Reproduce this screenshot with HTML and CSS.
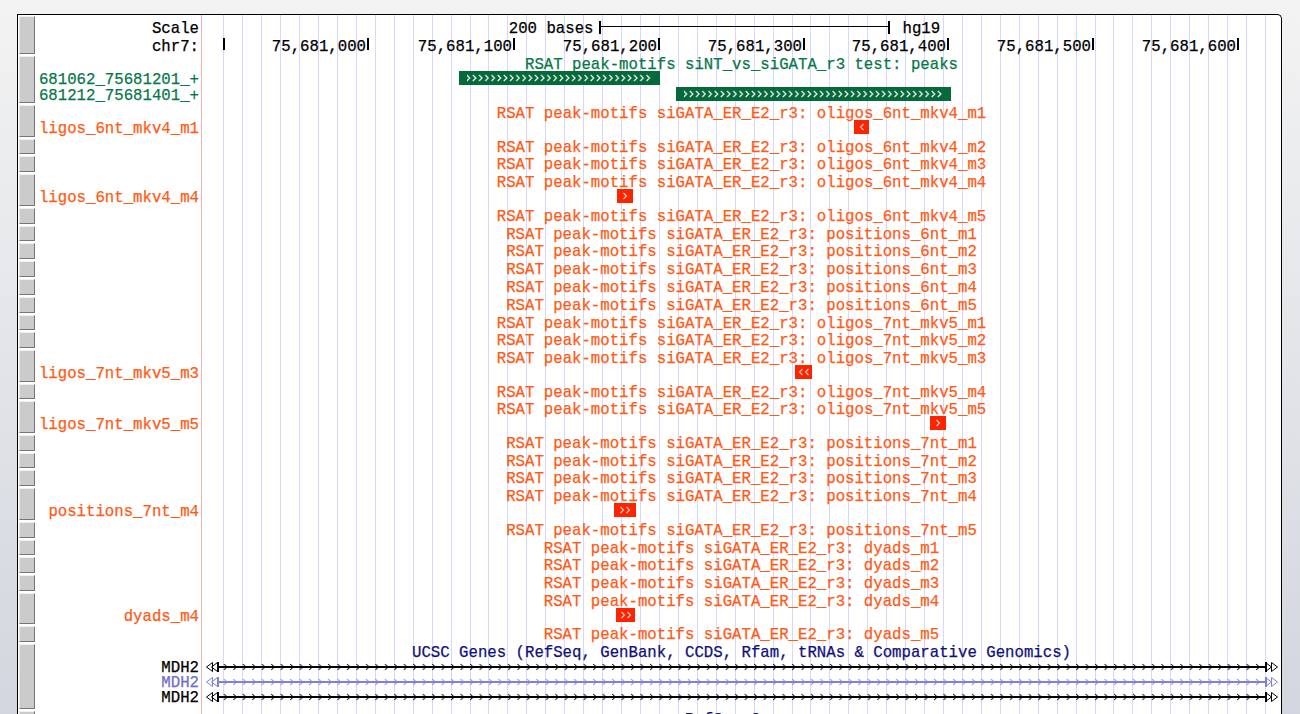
FILE: index.html
```html
<!DOCTYPE html>
<html>
<head>
<meta charset="utf-8">
<link rel="stylesheet" href="styles.css">
</head>
<body>
<svg class="defs" width="0" height="0" aria-hidden="true">
  <defs>
    <pattern id="pk" width="6.2" height="14" patternUnits="userSpaceOnUse">
      <path d="M1.5 4l3 3-3 3" fill="none" stroke="#ffffff" stroke-width="1.1"/>
    </pattern>
    <pattern id="gk" width="9.47" height="15" patternUnits="userSpaceOnUse">
      <path d="M3 5l3 3-3 3" fill="none" stroke="#000000" stroke-width="1"/>
    </pattern>
    <pattern id="gb" width="9.47" height="15" patternUnits="userSpaceOnUse">
      <path d="M3 5l3 3-3 3" fill="none" stroke="#8080d8" stroke-width="1"/>
    </pattern>
  </defs>
</svg>

<div class="panel">
  <svg class="grid" width="1079" height="100%">
    <path d="M21.5 0V2000M40.5 0V2000M59.5 0V2000M78.5 0V2000M97.5 0V2000M116.5 0V2000M135.5 0V2000M154.5 0V2000M173.5 0V2000M192.5 0V2000M211.5 0V2000M230.5 0V2000M249.5 0V2000M268.5 0V2000M286.5 0V2000M305.5 0V2000M324.5 0V2000M343.5 0V2000M362.5 0V2000M381.5 0V2000M400.5 0V2000M419.5 0V2000M438.5 0V2000M457.5 0V2000M476.5 0V2000M495.5 0V2000M514.5 0V2000M533.5 0V2000M552.5 0V2000M571.5 0V2000M590.5 0V2000M608.5 0V2000M627.5 0V2000M646.5 0V2000M665.5 0V2000M684.5 0V2000M703.5 0V2000M722.5 0V2000M741.5 0V2000M760.5 0V2000M779.5 0V2000M798.5 0V2000M817.5 0V2000M836.5 0V2000M855.5 0V2000M874.5 0V2000M893.5 0V2000M911.5 0V2000M930.5 0V2000M949.5 0V2000M968.5 0V2000M987.5 0V2000M1006.5 0V2000M1025.5 0V2000M1044.5 0V2000M1063.5 0V2000" stroke="#d6d6ff" stroke-width="1"/>
  </svg>

  <!-- Base position -->
  <div class="track base">
    <div class="btncol"><span class="btn"></span></div>
    <div class="labels">
      <div class="brow">Scale</div>
      <div class="brow">chr7:</div>
    </div>
    <div class="data">
      <div class="scalerow brow">
        <span class="sl">200 bases</span><span class="sbar"></span><span class="sr">hg19</span>
      </div>
      <div class="ruler brow">
        <span class="tick" style="left:21px"></span>
        <span class="tick" style="left:165px"><span>75,681,000</span></span>
        <span class="tick" style="left:311px"><span>75,681,100</span></span>
        <span class="tick" style="left:456px"><span>75,681,200</span></span>
        <span class="tick" style="left:601px"><span>75,681,300</span></span>
        <span class="tick" style="left:745px"><span>75,681,400</span></span>
        <span class="tick" style="left:890px"><span>75,681,500</span></span>
        <span class="tick" style="left:1035px"><span>75,681,600</span></span>
      </div>
    </div>
  </div>

  <!-- Peaks -->
  <div class="track green">
    <div class="btncol"><span class="btn"></span></div>
    <div class="labels">
      <div class="ttl"></div>
      <div class="irow">681062_75681201_+</div>
      <div class="irow">681212_75681401_+</div>
    </div>
    <div class="data">
      <div class="ttl">RSAT peak-motifs siNT_vs_siGATA_r3 test: peaks</div>
      <div class="irow">
        <svg class="peak" style="left:257px" width="201" height="14"><rect width="201" height="14" fill="#05693a"/><rect x="8" width="184" height="14" fill="url(#pk)"/></svg>
      </div>
      <div class="irow">
        <svg class="peak" style="left:474px" width="275" height="14"><rect width="275" height="14" fill="#05693a"/><rect x="8" width="259" height="14" fill="url(#pk)"/></svg>
      </div>
    </div>
  </div>

  <!-- oligos 6nt -->
  <div class="track motif">
    <div class="btncol"><span class="btn"></span></div>
    <div class="labels"><div class="ttl"></div><div class="irow">ligos_6nt_mkv4_m1</div></div>
    <div class="data">
      <div class="ttl">RSAT peak-motifs siGATA_ER_E2_r3: oligos_6nt_mkv4_m1</div>
      <div class="irow"><span class="feat" style="left:652px;width:15px"><svg width="6" height="14"><path d="M4.5 4l-3 3 3 3" class="chev"/></svg></span></div>
    </div>
  </div>
  <div class="track motif">
    <div class="btncol"><span class="btn"></span></div>
    <div class="labels"><div class="ttl"></div></div>
    <div class="data"><div class="ttl">RSAT peak-motifs siGATA_ER_E2_r3: oligos_6nt_mkv4_m2</div></div>
  </div>
  <div class="track motif">
    <div class="btncol"><span class="btn"></span></div>
    <div class="labels"><div class="ttl"></div></div>
    <div class="data"><div class="ttl">RSAT peak-motifs siGATA_ER_E2_r3: oligos_6nt_mkv4_m3</div></div>
  </div>
  <div class="track motif">
    <div class="btncol"><span class="btn"></span></div>
    <div class="labels"><div class="ttl"></div><div class="irow">ligos_6nt_mkv4_m4</div></div>
    <div class="data">
      <div class="ttl">RSAT peak-motifs siGATA_ER_E2_r3: oligos_6nt_mkv4_m4</div>
      <div class="irow"><span class="feat" style="left:415px;width:16px"><svg width="6" height="14"><path d="M1.5 4l3 3-3 3" class="chev"/></svg></span></div>
    </div>
  </div>
  <div class="track motif">
    <div class="btncol"><span class="btn"></span></div>
    <div class="labels"><div class="ttl"></div></div>
    <div class="data"><div class="ttl">RSAT peak-motifs siGATA_ER_E2_r3: oligos_6nt_mkv4_m5</div></div>
  </div>

  <!-- positions 6nt -->
  <div class="track motif">
    <div class="btncol"><span class="btn"></span></div>
    <div class="labels"><div class="ttl"></div></div>
    <div class="data"><div class="ttl">RSAT peak-motifs siGATA_ER_E2_r3: positions_6nt_m1</div></div>
  </div>
  <div class="track motif">
    <div class="btncol"><span class="btn"></span></div>
    <div class="labels"><div class="ttl"></div></div>
    <div class="data"><div class="ttl">RSAT peak-motifs siGATA_ER_E2_r3: positions_6nt_m2</div></div>
  </div>
  <div class="track motif">
    <div class="btncol"><span class="btn"></span></div>
    <div class="labels"><div class="ttl"></div></div>
    <div class="data"><div class="ttl">RSAT peak-motifs siGATA_ER_E2_r3: positions_6nt_m3</div></div>
  </div>
  <div class="track motif">
    <div class="btncol"><span class="btn"></span></div>
    <div class="labels"><div class="ttl"></div></div>
    <div class="data"><div class="ttl">RSAT peak-motifs siGATA_ER_E2_r3: positions_6nt_m4</div></div>
  </div>
  <div class="track motif">
    <div class="btncol"><span class="btn"></span></div>
    <div class="labels"><div class="ttl"></div></div>
    <div class="data"><div class="ttl">RSAT peak-motifs siGATA_ER_E2_r3: positions_6nt_m5</div></div>
  </div>

  <!-- oligos 7nt -->
  <div class="track motif">
    <div class="btncol"><span class="btn"></span></div>
    <div class="labels"><div class="ttl"></div></div>
    <div class="data"><div class="ttl">RSAT peak-motifs siGATA_ER_E2_r3: oligos_7nt_mkv5_m1</div></div>
  </div>
  <div class="track motif">
    <div class="btncol"><span class="btn"></span></div>
    <div class="labels"><div class="ttl"></div></div>
    <div class="data"><div class="ttl">RSAT peak-motifs siGATA_ER_E2_r3: oligos_7nt_mkv5_m2</div></div>
  </div>
  <div class="track motif">
    <div class="btncol"><span class="btn"></span></div>
    <div class="labels"><div class="ttl"></div><div class="irow">ligos_7nt_mkv5_m3</div></div>
    <div class="data">
      <div class="ttl">RSAT peak-motifs siGATA_ER_E2_r3: oligos_7nt_mkv5_m3</div>
      <div class="irow"><span class="feat" style="left:593px;width:17px"><svg width="12" height="14"><path d="M4.5 4l-3 3 3 3M10.5 4l-3 3 3 3" class="chev"/></svg></span></div>
    </div>
  </div>
  <div class="track motif">
    <div class="btncol"><span class="btn"></span></div>
    <div class="labels"><div class="ttl"></div></div>
    <div class="data"><div class="ttl">RSAT peak-motifs siGATA_ER_E2_r3: oligos_7nt_mkv5_m4</div></div>
  </div>
  <div class="track motif">
    <div class="btncol"><span class="btn"></span></div>
    <div class="labels"><div class="ttl"></div><div class="irow">ligos_7nt_mkv5_m5</div></div>
    <div class="data">
      <div class="ttl">RSAT peak-motifs siGATA_ER_E2_r3: oligos_7nt_mkv5_m5</div>
      <div class="irow"><span class="feat" style="left:728px;width:16px"><svg width="6" height="14"><path d="M1.5 4l3 3-3 3" class="chev"/></svg></span></div>
    </div>
  </div>

  <!-- positions 7nt -->
  <div class="track motif">
    <div class="btncol"><span class="btn"></span></div>
    <div class="labels"><div class="ttl"></div></div>
    <div class="data"><div class="ttl">RSAT peak-motifs siGATA_ER_E2_r3: positions_7nt_m1</div></div>
  </div>
  <div class="track motif">
    <div class="btncol"><span class="btn"></span></div>
    <div class="labels"><div class="ttl"></div></div>
    <div class="data"><div class="ttl">RSAT peak-motifs siGATA_ER_E2_r3: positions_7nt_m2</div></div>
  </div>
  <div class="track motif">
    <div class="btncol"><span class="btn"></span></div>
    <div class="labels"><div class="ttl"></div></div>
    <div class="data"><div class="ttl">RSAT peak-motifs siGATA_ER_E2_r3: positions_7nt_m3</div></div>
  </div>
  <div class="track motif">
    <div class="btncol"><span class="btn"></span></div>
    <div class="labels"><div class="ttl"></div><div class="irow">positions_7nt_m4</div></div>
    <div class="data">
      <div class="ttl">RSAT peak-motifs siGATA_ER_E2_r3: positions_7nt_m4</div>
      <div class="irow"><span class="feat" style="left:412px;width:22px"><svg width="12" height="14"><path d="M1.5 4l3 3-3 3M7.5 4l3 3-3 3" class="chev"/></svg></span></div>
    </div>
  </div>
  <div class="track motif">
    <div class="btncol"><span class="btn"></span></div>
    <div class="labels"><div class="ttl"></div></div>
    <div class="data"><div class="ttl">RSAT peak-motifs siGATA_ER_E2_r3: positions_7nt_m5</div></div>
  </div>

  <!-- dyads -->
  <div class="track motif">
    <div class="btncol"><span class="btn"></span></div>
    <div class="labels"><div class="ttl"></div></div>
    <div class="data"><div class="ttl">RSAT peak-motifs siGATA_ER_E2_r3: dyads_m1</div></div>
  </div>
  <div class="track motif">
    <div class="btncol"><span class="btn"></span></div>
    <div class="labels"><div class="ttl"></div></div>
    <div class="data"><div class="ttl">RSAT peak-motifs siGATA_ER_E2_r3: dyads_m2</div></div>
  </div>
  <div class="track motif">
    <div class="btncol"><span class="btn"></span></div>
    <div class="labels"><div class="ttl"></div></div>
    <div class="data"><div class="ttl">RSAT peak-motifs siGATA_ER_E2_r3: dyads_m3</div></div>
  </div>
  <div class="track motif">
    <div class="btncol"><span class="btn"></span></div>
    <div class="labels"><div class="ttl"></div><div class="irow">dyads_m4</div></div>
    <div class="data">
      <div class="ttl">RSAT peak-motifs siGATA_ER_E2_r3: dyads_m4</div>
      <div class="irow"><span class="feat" style="left:414px;width:19px"><svg width="12" height="14"><path d="M1.5 4l3 3-3 3M7.5 4l3 3-3 3" class="chev"/></svg></span></div>
    </div>
  </div>
  <div class="track motif">
    <div class="btncol"><span class="btn"></span></div>
    <div class="labels"><div class="ttl"></div></div>
    <div class="data"><div class="ttl">RSAT peak-motifs siGATA_ER_E2_r3: dyads_m5</div></div>
  </div>

  <!-- UCSC Genes -->
  <div class="track genes">
    <div class="btncol"><span class="btn"></span></div>
    <div class="labels">
      <div class="ttl"></div>
      <div class="grow">MDH2</div>
      <div class="grow alt">MDH2</div>
      <div class="grow">MDH2</div>
    </div>
    <div class="data">
      <div class="ttl">UCSC Genes (RefSeq, GenBank, CCDS, Rfam, tRNAs &amp; Comparative Genomics)</div>
      <div class="grow">
        <svg class="gene" width="1079" height="15">
          <rect x="16" y="7" width="1048" height="2" fill="#000"/>
          <rect x="16" y="0" width="1048" height="15" fill="url(#gk)"/>
          <path d="M4.5 8L10.5 3.5V12.5ZM9.5 8L15.5 3.5V12.5Z" fill="none" stroke="#000"/>
          <rect x="15" y="3" width="2" height="10" fill="#000"/>
          <rect x="1063" y="3" width="2" height="10" fill="#000"/>
          <path d="M1069.5 8L1063.5 3.5V12.5ZM1075.5 8L1069.5 3.5V12.5Z" fill="none" stroke="#000"/>
        </svg>
      </div>
      <div class="grow">
        <svg class="gene" width="1079" height="15">
          <rect x="16" y="7" width="1048" height="2" fill="#8080d8"/>
          <rect x="16" y="0" width="1048" height="15" fill="url(#gb)"/>
          <path d="M4.5 8L10.5 3.5V12.5ZM9.5 8L15.5 3.5V12.5Z" fill="none" stroke="#8080d8"/>
          <rect x="15" y="3" width="2" height="10" fill="#8080d8"/>
          <rect x="1063" y="3" width="2" height="10" fill="#8080d8"/>
          <path d="M1069.5 8L1063.5 3.5V12.5ZM1075.5 8L1069.5 3.5V12.5Z" fill="none" stroke="#8080d8"/>
        </svg>
      </div>
      <div class="grow">
        <svg class="gene" width="1079" height="15">
          <rect x="16" y="7" width="1048" height="2" fill="#000"/>
          <rect x="16" y="0" width="1048" height="15" fill="url(#gk)"/>
          <path d="M4.5 8L10.5 3.5V12.5ZM9.5 8L15.5 3.5V12.5Z" fill="none" stroke="#000"/>
          <rect x="15" y="3" width="2" height="10" fill="#000"/>
          <rect x="1063" y="3" width="2" height="10" fill="#000"/>
          <path d="M1069.5 8L1063.5 3.5V12.5ZM1075.5 8L1069.5 3.5V12.5Z" fill="none" stroke="#000"/>
        </svg>
      </div>
    </div>
  </div>

  <div class="track genes">
    <div class="btncol"><span class="btn"></span></div>
    <div class="labels"><div class="ttl"></div><div class="grow"></div></div>
    <div class="data"><div class="ttl">RefSeq Genes</div><div class="grow"></div></div>
  </div>
</div>
</body>
</html>
```

FILE: styles.css
```css
html, body {
  margin: 0;
  height: 714px;
  overflow: hidden;
}

body {
  background: linear-gradient(#f3f3f3, #d2d6de);
  font-family: "Liberation Mono", "DejaVu Sans Mono", monospace;
  font-size: 15.7px;
  color: #000;
  -webkit-text-stroke: 0.25px currentColor;
}

.defs {
  position: absolute;
  width: 0;
  height: 0;
}

.panel {
  position: relative;
  margin: 14px 0 0 17px;
  width: 1263px;
  border: 1px solid #000;
  border-bottom: 0;
  border-top-right-radius: 5px;
  background: #fff;
}

.grid {
  position: absolute;
  left: 184px;
  top: 0;
  z-index: 0;
}

.track {
  position: relative;
  z-index: 1;
  display: grid;
  grid-template-columns: 18px 166px 1079px;
}

.btncol {
  display: flex;
  padding: 1px 0 1px 1px;
}

.btn {
  width: 16px;
  box-sizing: border-box;
  background: #cbcbcb;
  border: 1px solid;
  border-color: #f0f0f0 #767676 #767676 #e6e6e6;
}

.labels {
  box-sizing: border-box;
  border-right: 1px solid #f5b4b4;
  text-align: right;
  padding-right: 2px;
  white-space: nowrap;
  overflow: hidden;
}

.data {
  position: relative;
  white-space: nowrap;
}

.labels, .data {
  padding-bottom: 1.8px;
}

.ttl {
  height: 16px;
  line-height: 20px;
  text-align: center;
}

.labels .ttl {
  text-align: right;
}

.irow {
  position: relative;
  height: 15.7px;
  line-height: 18px;
}

/* base position track */
.base .labels, .base .data {
  padding: 4px 0 2px;
}

.base .labels {
  padding-right: 2px;
}

.brow {
  height: 16px;
  line-height: 20px;
}

.base .brow + .brow {
  margin-top: 2px;
}

.scalerow {
  display: grid;
  grid-template-columns: 1fr 291px 1fr;
  grid-template-rows: 16px;
  padding-left: 5px;
}

.sl {
  text-align: right;
  padding-right: 5px;
}

.sr {
  padding-left: 13px;
}

.sbar {
  align-self: start;
  margin-top: 1.5px;
  height: 13px;
  box-sizing: border-box;
  border-left: 2px solid #000;
  border-right: 2px solid #000;
  background: linear-gradient(#000, #000) 0 5.5px / 100% 1px no-repeat;
}

.ruler {
  position: relative;
}

.tick {
  position: absolute;
  top: 1px;
  width: 2px;
  height: 12px;
  background: #000;
}

.tick span {
  position: absolute;
  right: 3px;
  top: -1px;
  line-height: 20px;
}

/* peaks */
.green {
  color: #08774a;
}

.peak {
  position: absolute;
  top: 0;
  display: block;
}

/* motifs */
.motif {
  color: #ff5a16;
}

.feat {
  position: absolute;
  top: 0;
  height: 14px;
  background: #ff2400;
  display: flex;
  align-items: center;
  justify-content: center;
}

.feat svg {
  display: block;
}

.chev {
  fill: none;
  stroke: #ffd6cc;
  stroke-width: 1.1;
}

/* genes */
.genes {
  color: #000;
}

.genes .data .ttl {
  color: #10107c;
}

.genes .labels, .genes .data {
  padding-bottom: 6px;
}

.grow {
  position: relative;
  height: 15px;
  line-height: 19px;
}

.grow.alt {
  color: #6e6ec8;
}

.gene {
  display: block;
}
```
